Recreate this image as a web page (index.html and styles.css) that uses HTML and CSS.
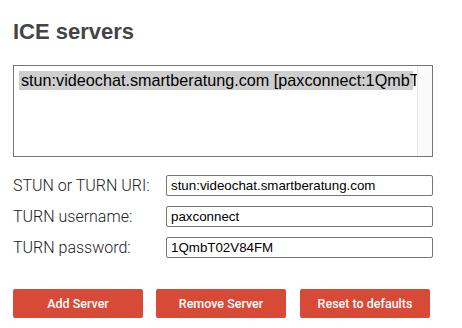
FILE: index.html
```html
<!DOCTYPE html>
<html lang="en">
<head>
    <meta charset="UTF-8">
    <title>Trickle ICE</title>
    <link rel="stylesheet" href="styles.css">
</head>
<body>

<section class="ice-servers">
    <h2>ICE servers</h2>

    <div class="server-box">
        <select id="servers" class="server-list" size="4">
            <option value="stun" selected>stun:videochat.smartberatung.com [paxconnect:1QmbT02V84FM]</option>
        </select>
        <div class="scroll-track"></div>
    </div>

    <div class="fields">
        <div class="form-row">
            <label for="url">STUN or TURN URI:</label>
            <input type="text" id="url" value="stun:videochat.smartberatung.com">
        </div>
        <div class="form-row">
            <label for="username">TURN username:</label>
            <input type="text" id="username" value="paxconnect">
        </div>
        <div class="form-row">
            <label for="password">TURN password:</label>
            <input type="text" id="password" value="1QmbT02V84FM">
        </div>
    </div>

    <div class="buttons">
        <button id="add">Add Server</button>
        <button id="remove">Remove Server</button>
        <button id="reset">Reset to defaults</button>
    </div>
</section>

</body>
</html>
```

FILE: styles.css
```css
* {
    box-sizing: border-box;
}

body {
    margin: 0;
    padding: 0 13px;
    background-color: #ffffff;
    font-family: 'Roboto', sans-serif;
    font-weight: 300;
    color: #444;
}

h2 {
    margin: 0;
    padding-top: 19px;
    height: 65px;
    font-family: 'Liberation Sans', Arial, sans-serif;
    font-size: 22px;
    font-weight: 700;
    color: #444;
}

/* lista de servidores + barra de desplazamiento */
.server-box {
    display: flex;
    width: 420px;
    height: 92px;
    border: 1px solid #767676;
}

.server-list {
    flex: 1;
    min-width: 0;
    height: 100%;
    margin: 0;
    padding: 5px 4px 5px 5px;
    border: none;
    outline: none;
    font-family: 'Liberation Sans', Arial, sans-serif;
    font-size: 16.2px;
    color: #000;
    overflow: hidden;
}

.server-list option {
    padding: 0 2px;
    height: 19px;
}

.server-list option:checked {
    background: #cecece linear-gradient(#cecece, #cecece);
    color: #000;
}

.scroll-track {
    width: 15px;
    background-color: #fafafa;
    border-left: 1px solid #e8e8e8;
}

/* campos */
.fields {
    display: flex;
    flex-direction: column;
    gap: 10px;
    margin-top: 18px;
}

.form-row {
    display: flex;
    align-items: center;
    height: 21px;
}

label {
    width: 153px;
    font-size: 16px;
    color: #222;
}

input[type="text"] {
    width: 267px;
    height: 21px;
    padding: 1px 4px;
    border: 1px solid #767676;
    border-radius: 2px;
    font-family: 'Liberation Sans', Arial, sans-serif;
    font-size: 13.33px;
    color: #000;
}

/* botones */
.buttons {
    display: flex;
    gap: 13px;
    margin-top: 31px;
}

.buttons button {
    width: 130px;
    height: 29px;
    padding: 0;
    border: none;
    border-radius: 2px;
    background-color: #d84a38;
    color: #ffffff;
    font-family: 'Roboto', sans-serif;
    font-size: 12.5px;
    font-weight: 500;
    cursor: pointer;
}

.buttons button:nth-child(3) {
    margin-left: 1px;
}
```
